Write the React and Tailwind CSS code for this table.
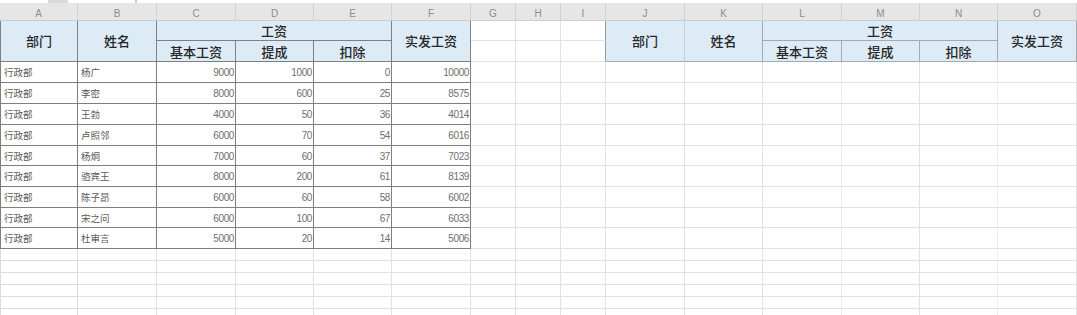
const letters = ["A", "B", "C", "D", "E", "F", "G", "H", "I", "J", "K", "L", "M", "N", "O"];

const rows = [
  ["杨广", 9000, 1000, 0, 10000],
  ["李密", 8000, 600, 25, 8575],
  ["王勃", 4000, 50, 36, 4014],
  ["卢照邻", 6000, 70, 54, 6016],
  ["杨炯", 7000, 60, 37, 7023],
  ["骆宾王", 8000, 200, 61, 8139],
  ["陈子昂", 6000, 60, 58, 6002],
  ["宋之问", 6000, 100, 67, 6033],
  ["杜审言", 5000, 20, 14, 5006],
];

const gridCols =
  "grid grid-cols-[78px_79px_79px_78px_78px_79px_45px_45px_45px_79px_78px_79px_78px_78px_79px]";

// light gridline colour per column (some look faintly greenish in the sheet)
const lightLine = (i) =>
  i === 11 || i === 13 ? "border-r border-b border-r-[#eaeedc] border-b-[#e2e2e2]" : "border-r border-b border-[#e2e2e2]";

const Head = ({ children, className = "" }) => (
  <div
    className={`flex items-center justify-center bg-[#ddebf7] text-[13px] font-medium text-[#262626] ${className}`}
  >
    {children}
  </div>
);

const Blank = ({ className = "" }) => <div className={className} />;

const TopStrip = () => (
  <div className="flex h-[3px] bg-white">
    <div className="w-[48px]" />
    <div className="w-[20px] bg-[#d9d9d9]" />
    <div className="w-[69px] border-r-2 border-[#cfcfcf]" />
    <div className="flex-1" />
  </div>
);

const ColumnLetters = () => (
  <div className={`${gridCols} h-[18px] bg-[#e6e6e6] border-b border-[#cdcdcd]`}>
    {letters.map((l) => (
      <div
        key={l}
        className="flex items-end justify-center pb-[1px] border-r border-[#d2d2d2] text-[10px] leading-none text-[#8c8c8c] font-['Liberation_Sans',sans-serif]"
      >
        {l}
      </div>
    ))}
  </div>
);

const dark = "border-r border-b border-[#7f7f7f]";
const rightHead = "border-r border-b border-[#a3a9b0]";

const App = () => {
  return (
    <div className="w-[1077px] h-[315px] overflow-hidden bg-white font-['Noto_Sans_CJK_SC',sans-serif]">
      <TopStrip />
      <ColumnLetters />

      <div
        className={`${gridCols} grid-rows-[20px_21px_21px_21px_21px_21px_20px_21px_21px_20px_21px_12px_12px_12px_12px_12px_12px]`}
      >
        {/* header, first line */}
        <Head className={`row-span-2 border-l ${dark}`}>部门</Head>
        <Head className={`row-span-2 ${dark}`}>姓名</Head>
        <Head className={`col-span-3 ${dark}`}>工资</Head>
        <Head className={`row-span-2 ${dark}`}>实发工资</Head>
        <Blank className={lightLine(6)} />
        <Blank className={lightLine(7)} />
        <Blank className="border-r border-b border-r-[#9a9a9a] border-b-[#e2e2e2]" />
        <Head className="row-span-2 border-r border-b border-r-[#c6ced6] border-b-[#a3a9b0]">部门</Head>
        <Head className={`row-span-2 ${rightHead}`}>姓名</Head>
        <Head className={`col-span-3 ${rightHead}`}>工资</Head>
        <Head className={`row-span-2 ${rightHead}`}>实发工资</Head>

        {/* header, second line */}
        <Head className={`pt-[2px] ${dark}`}>基本工资</Head>
        <Head className={`pt-[2px] ${dark}`}>提成</Head>
        <Head className={`pt-[2px] ${dark}`}>扣除</Head>
        <Blank className={lightLine(6)} />
        <Blank className={lightLine(7)} />
        <Blank className="border-r border-b border-r-[#9a9a9a] border-b-[#e2e2e2]" />
        <Head className={`pt-[2px] ${rightHead}`}>基本工资</Head>
        <Head className={`pt-[2px] ${rightHead}`}>提成</Head>
        <Head className={`pt-[2px] ${rightHead}`}>扣除</Head>

        {/* data */}
        {rows.map((r) =>
          [
            <div key="a" className={`flex items-center pl-[3px] pt-[1px] border-l text-[9.5px] text-[#5a5a5a] ${dark}`}>
              行政部
            </div>,
            <div key="b" className={`flex items-center pl-[3px] pt-[1px] text-[9.5px] text-[#5a5a5a] ${dark}`}>
              {r[0]}
            </div>,
            ...r.slice(1).map((n, j) => (
              <div
                key={`n${j}`}
                className={`flex items-center justify-end pr-[1px] pt-[1px] text-[10px] tracking-[-0.4px] text-[#6e6e6e] font-['Liberation_Sans',sans-serif] ${dark}`}
              >
                {n}
              </div>
            )),
            ...[6, 7, 8, 9, 10, 11, 12, 13, 14].map((i) => <Blank key={`e${i}`} className={lightLine(i)} />),
          ]
        )}

        {/* empty rows below the table */}
        {[0, 1, 2, 3, 4, 5].map((k) =>
          letters.map((l, i) => (
            <Blank
              key={`${k}${l}`}
              className={i === 0 ? "border-l border-r border-b border-[#dcdcdc]" : lightLine(i)}
            />
          ))
        )}
      </div>
    </div>
  );
};

export default App;
